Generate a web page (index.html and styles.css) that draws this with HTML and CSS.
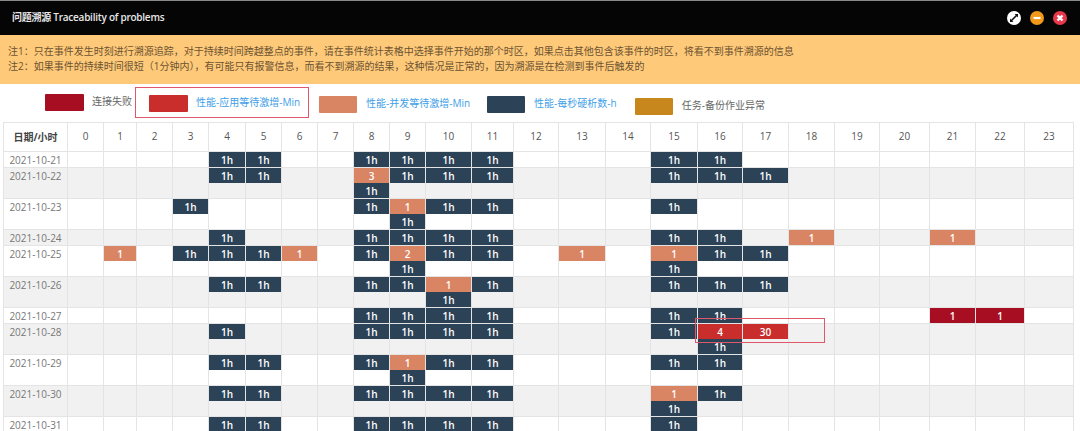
FILE: index.html
```html
<!DOCTYPE html>
<html>
<head>
	<meta http-equiv="CONTENT-TYPE" content="text/html; charset=UTF-8">
	<title>问题溯源 Traceability of problems</title>
	<link rel="stylesheet" href="styles.css">
</head>
<body>
	<div class="titlebar">
		<span class="title">问题溯源 Traceability of problems</span>
		<div class="tools">
			<svg class="tool" viewBox="0 0 14 14"><circle cx="7" cy="7" r="7" fill="#fff"/><path d="M4 10 10 4" stroke="#111" stroke-width="1.6"/><path d="M7.6 3h3.4v3.4zM3 7.6V11h3.4z" fill="#111"/></svg>
			<svg class="tool" viewBox="0 0 14 14"><circle cx="7" cy="7" r="7" fill="#f2991a"/><path d="M3.5 7h7" stroke="#fff" stroke-width="2.2"/></svg>
			<svg class="tool" viewBox="0 0 14 14"><circle cx="7" cy="7" r="7" fill="#e8384c"/><path d="M4.5 4.5l5 5M9.5 4.5l-5 5" stroke="#fff" stroke-width="2.4"/></svg>
		</div>
	</div>

	<div class="notice">
		<p>注1：只在事件发生时刻进行溯源追踪，对于持续时间跨越整点的事件，请在事件统计表格中选择事件开始的那个时区，如果点击其他包含该事件的时区，将看不到事件溯源的信息</p>
		<p>注2：如果事件的持续时间很短（1分钟内），有可能只有报警信息，而看不到溯源的结果，这种情况是正常的，因为溯源是在检测到事件后触发的</p>
	</div>

	<div class="legend">
		<div class="item first"><span class="swatch darkred"></span><span class="label">连接失败</span></div>
		<div class="item boxed"><span class="swatch red"></span><span class="label link">性能-应用等待激增-Min</span></div>
		<div class="item third"><span class="swatch orange"></span><span class="label link">性能-并发等待激增-Min</span></div>
		<div class="item fourth"><span class="swatch navy"></span><span class="label link">性能-每秒硬析数-h</span></div>
		<div class="item fifth"><span class="swatch gold"></span><span class="label">任务-备份作业异常</span></div>
	</div>

	<div class="wrap">
		<table class="grid">
			<colgroup>
				<col class="w64"><col class="w36"><col class="w33"><col class="w36"><col class="w36"><col class="w37"><col class="w36"><col class="w36"><col class="w36"><col class="w36"><col class="w36"><col class="w46"><col class="w42"><col class="w45"><col class="w47"><col class="w45"><col class="w47"><col class="w45"><col class="w46"><col class="w46"><col class="w45"><col class="w50"><col class="w46"><col class="w49"><col class="w49">
			</colgroup>
			<thead>
				<tr><th class="corner">日期/小时</th><th>0</th><th>1</th><th>2</th><th>3</th><th>4</th><th>5</th><th>6</th><th>7</th><th>8</th><th>9</th><th>10</th><th>11</th><th>12</th><th>13</th><th>14</th><th>15</th><th>16</th><th>17</th><th>18</th><th>19</th><th>20</th><th>21</th><th>22</th><th>23</th></tr>
			</thead>
			<tbody>
				<tr><td class="date">2021-10-21</td><td></td><td></td><td></td><td></td><td><div class="bar navy">1h</div></td><td><div class="bar navy">1h</div></td><td></td><td></td><td><div class="bar navy">1h</div></td><td><div class="bar navy">1h</div></td><td><div class="bar navy">1h</div></td><td><div class="bar navy">1h</div></td><td></td><td></td><td></td><td><div class="bar navy">1h</div></td><td><div class="bar navy">1h</div></td><td></td><td></td><td></td><td></td><td></td><td></td><td></td></tr>
				<tr><td class="date">2021-10-22</td><td></td><td></td><td></td><td></td><td><div class="bar navy">1h</div></td><td><div class="bar navy">1h</div></td><td></td><td></td><td><div class="bar orange">3</div><div class="bar navy">1h</div></td><td><div class="bar navy">1h</div></td><td><div class="bar navy">1h</div></td><td><div class="bar navy">1h</div></td><td></td><td></td><td></td><td><div class="bar navy">1h</div></td><td><div class="bar navy">1h</div></td><td><div class="bar navy">1h</div></td><td></td><td></td><td></td><td></td><td></td><td></td></tr>
				<tr><td class="date">2021-10-23</td><td></td><td></td><td></td><td><div class="bar navy">1h</div></td><td></td><td></td><td></td><td></td><td><div class="bar navy">1h</div></td><td><div class="bar orange">1</div><div class="bar navy">1h</div></td><td><div class="bar navy">1h</div></td><td><div class="bar navy">1h</div></td><td></td><td></td><td></td><td><div class="bar navy">1h</div></td><td></td><td></td><td></td><td></td><td></td><td></td><td></td><td></td></tr>
				<tr><td class="date">2021-10-24</td><td></td><td></td><td></td><td></td><td><div class="bar navy">1h</div></td><td></td><td></td><td></td><td><div class="bar navy">1h</div></td><td><div class="bar navy">1h</div></td><td><div class="bar navy">1h</div></td><td><div class="bar navy">1h</div></td><td></td><td></td><td></td><td><div class="bar navy">1h</div></td><td><div class="bar navy">1h</div></td><td></td><td><div class="bar orange">1</div></td><td></td><td></td><td><div class="bar orange">1</div></td><td></td><td></td></tr>
				<tr><td class="date">2021-10-25</td><td></td><td><div class="bar orange">1</div></td><td></td><td><div class="bar navy">1h</div></td><td><div class="bar navy">1h</div></td><td><div class="bar navy">1h</div></td><td><div class="bar orange">1</div></td><td></td><td><div class="bar navy">1h</div></td><td><div class="bar orange">2</div><div class="bar navy">1h</div></td><td><div class="bar navy">1h</div></td><td><div class="bar navy">1h</div></td><td></td><td><div class="bar orange">1</div></td><td></td><td><div class="bar orange">1</div><div class="bar navy">1h</div></td><td><div class="bar navy">1h</div></td><td><div class="bar navy">1h</div></td><td></td><td></td><td></td><td></td><td></td><td></td></tr>
				<tr><td class="date">2021-10-26</td><td></td><td></td><td></td><td></td><td><div class="bar navy">1h</div></td><td><div class="bar navy">1h</div></td><td></td><td></td><td><div class="bar navy">1h</div></td><td><div class="bar navy">1h</div></td><td><div class="bar orange">1</div><div class="bar navy">1h</div></td><td><div class="bar navy">1h</div></td><td></td><td></td><td></td><td><div class="bar navy">1h</div></td><td><div class="bar navy">1h</div></td><td><div class="bar navy">1h</div></td><td></td><td></td><td></td><td></td><td></td><td></td></tr>
				<tr><td class="date">2021-10-27</td><td></td><td></td><td></td><td></td><td></td><td></td><td></td><td></td><td><div class="bar navy">1h</div></td><td><div class="bar navy">1h</div></td><td><div class="bar navy">1h</div></td><td><div class="bar navy">1h</div></td><td></td><td></td><td></td><td><div class="bar navy">1h</div></td><td><div class="bar navy">1h</div></td><td></td><td></td><td></td><td></td><td><div class="bar darkred">1</div></td><td><div class="bar darkred">1</div></td><td></td></tr>
				<tr><td class="date">2021-10-28</td><td></td><td></td><td></td><td></td><td><div class="bar navy">1h</div></td><td></td><td></td><td></td><td><div class="bar navy">1h</div></td><td><div class="bar navy">1h</div></td><td><div class="bar navy">1h</div></td><td><div class="bar navy">1h</div></td><td></td><td></td><td></td><td><div class="bar navy">1h</div></td><td><div class="bar red">4</div><div class="bar navy">1h</div></td><td><div class="bar red">30</div></td><td></td><td></td><td></td><td></td><td></td><td></td></tr>
				<tr><td class="date">2021-10-29</td><td></td><td></td><td></td><td></td><td><div class="bar navy">1h</div></td><td><div class="bar navy">1h</div></td><td></td><td></td><td><div class="bar navy">1h</div></td><td><div class="bar orange">1</div><div class="bar navy">1h</div></td><td><div class="bar navy">1h</div></td><td><div class="bar navy">1h</div></td><td></td><td></td><td></td><td><div class="bar navy">1h</div></td><td><div class="bar navy">1h</div></td><td></td><td></td><td></td><td></td><td></td><td></td><td></td></tr>
				<tr><td class="date">2021-10-30</td><td></td><td></td><td></td><td></td><td><div class="bar navy">1h</div></td><td><div class="bar navy">1h</div></td><td></td><td></td><td><div class="bar navy">1h</div></td><td><div class="bar navy">1h</div></td><td><div class="bar navy">1h</div></td><td><div class="bar navy">1h</div></td><td></td><td></td><td></td><td><div class="bar orange">1</div><div class="bar navy">1h</div></td><td><div class="bar navy">1h</div></td><td></td><td></td><td></td><td></td><td></td><td></td><td></td></tr>
				<tr><td class="date">2021-10-31</td><td></td><td></td><td></td><td></td><td><div class="bar navy">1h</div></td><td><div class="bar navy">1h</div></td><td></td><td></td><td><div class="bar navy">1h</div></td><td><div class="bar navy">1h</div></td><td><div class="bar navy">1h</div></td><td><div class="bar navy">1h</div></td><td></td><td></td><td></td><td><div class="bar navy">1h</div></td><td></td><td></td><td></td><td></td><td></td><td></td><td></td><td></td></tr>
			</tbody>
		</table>
		<div class="mark"></div>
	</div>
</body>
</html>
```

FILE: styles.css
```css
* {
    box-sizing: border-box;
    padding: 0;
    margin: 0;
}

html, body {
    height: 431px;
    overflow: hidden;
}

body {
    font-family: "Open Sans", "Noto Sans CJK SC", sans-serif;
    font-size: 10px;
    color: #666;
    background-color: #fff;
}

.titlebar {
    height: 35px;
    display: flex;
    justify-content: space-between;
    align-items: center;
    padding: 0 13px 0 12px;
    background-color: #050505;
    border-top: 1px solid #8a8a8a;
}

.title {
    color: #e8e8e8;
    font-size: 10px;
    font-weight: 600;
    letter-spacing: -0.25px;
    padding-bottom: 3px;
}

.tools {
    display: flex;
    gap: 9px;
}

.tool {
    width: 14px;
    height: 14px;
    display: block;
}

.notice {
    height: 49px;
    padding: 9px 8px 0;
    background-color: #ffc97a;
    color: #6b5330;
    line-height: 15px;
    white-space: nowrap;
}

.legend {
    height: 38px;
    display: flex;
    align-items: flex-start;
    padding-left: 45px;
    white-space: nowrap;
}

.item {
    display: flex;
    align-items: flex-start;
}

.swatch {
    display: block;
    width: 38px;
    height: 17px;
    margin-right: 9px;
    border-radius: 1px;
}

.label {
    line-height: 14px;
}

.first {
    margin-top: 10px;
    margin-right: 3px;
}

.first .swatch,
.boxed .swatch {
    width: 39px;
    margin-right: 8px;
}

.boxed {
    margin-top: 3px;
    width: 174px;
    height: 31px;
    padding: 6.5px 0 0 13px;
    border: 1.5px solid #e0566a;
}

.third {
    margin-top: 12px;
    margin-left: 10px;
}

.fourth {
    margin-top: 12px;
    margin-left: 17px;
}

.fifth {
    margin-top: 14px;
    margin-left: 18px;
}

.link {
    color: #3ea0e8;
}

.darkred { background-color: #a80e22; }
.red { background-color: #c92e2c; }
.orange { background-color: #d98462; }
.navy { background-color: #2b4257; }
.gold { background-color: #c8871c; }

.wrap {
    position: relative;
    padding-left: 3px;
}

.grid {
    table-layout: fixed;
    width: 1070px;
    border-collapse: collapse;
}

.w33 { width: 33px; }
.w36 { width: 36px; }
.w37 { width: 37px; }
.w42 { width: 42px; }
.w45 { width: 45px; }
.w46 { width: 46px; }
.w47 { width: 47px; }
.w49 { width: 49px; }
.w50 { width: 50px; }
.w64 { width: 64px; }

.grid th,
.grid td {
    border: 1px solid #e4e4e4;
    padding: 0;
}

.grid th {
    height: 29px;
    padding-bottom: 2px;
    font-weight: 400;
    text-align: center;
    color: #555;
}

.grid .corner {
    font-weight: 700;
    color: #444;
}

.grid td {
    height: 16px;
    vertical-align: top;
}

.grid tbody tr:nth-child(even) {
    background-color: #f1f1f1;
}

.grid .date {
    text-align: center;
    padding-top: 1px;
    line-height: 14px;
    color: #777;
}

.bar {
    height: 15px;
    line-height: 16px;
    text-align: center;
    color: #fff;
    font-weight: 600;
}

.mark {
    position: absolute;
    left: 695px;
    top: 196px;
    width: 130px;
    height: 25px;
    border: 1.5px solid #e0566a;
}
```
